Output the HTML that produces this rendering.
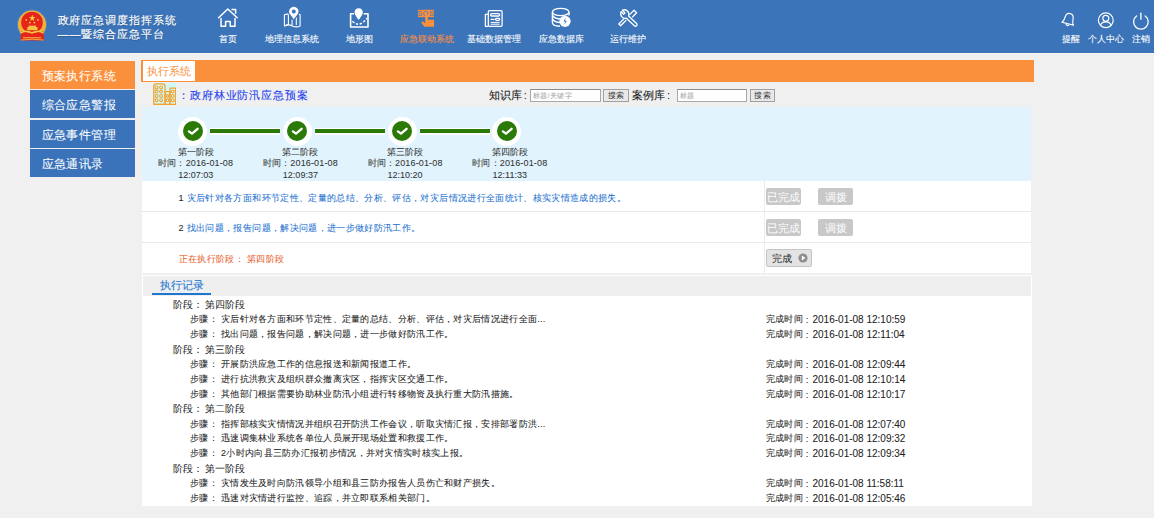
<!DOCTYPE html>
<html><head><meta charset="utf-8">
<style>
*{margin:0;padding:0;box-sizing:border-box}
html,body{width:1154px;height:518px;overflow:hidden;background:#f0f0f0;font-family:"Liberation Sans",sans-serif;color:#333}
.a{position:absolute}
.t{position:absolute;white-space:nowrap}
#hd{left:0;top:0;width:1154px;height:53px;background:#3b74b9}
#hdl{left:0;top:53px;width:1154px;height:1px;background:#f7f8f2}
.nav{position:absolute;top:0;width:70px;height:53px;color:#fff;text-align:center}
.nav svg{position:absolute;left:50%;top:6px;transform:translateX(-50%)}
.nav .lb{position:absolute;left:0;width:100%;top:33.6px;font-size:9px;line-height:11px;-webkit-text-stroke-width:.1px}
.menu{position:absolute;left:30px;width:105.2px;height:28px;background:#3a73ba;color:#fff;font-size:12px;letter-spacing:.4px;line-height:30px;padding-left:11.7px;-webkit-text-stroke-width:.05px}
.circ{position:absolute;top:116.5px;width:29px;height:29px;border-radius:50%;background:#fff}
.circ i{position:absolute;left:4.5px;top:4.5px;width:20px;height:20px;border-radius:50%;background:#2b7a08}
.circ svg{position:absolute;left:4.5px;top:4.5px}
.ln{position:absolute;top:127.5px;height:7px;background:#fff}
.ln i{position:absolute;left:0;right:0;top:1.5px;height:4px;background:#2b7a08}
.stg{position:absolute;width:100px;text-align:center;font-size:9px;line-height:11.5px;color:#333;-webkit-text-stroke-width:.05px}
.row{position:absolute;left:142px;width:889px;background:#fff}
.btn{position:absolute;height:17px;background:#c8c8c8;color:#fff;font-size:11px;line-height:19px;text-align:center;border-radius:2px;white-space:nowrap}
.rec{position:absolute;font-size:9.5px;line-height:15px;color:#222;white-space:nowrap;-webkit-text-stroke-width:.06px}
</style></head><body>
<div id="hd" class="a"></div>
<div id="hdl" class="a"></div>

<svg class="a" style="left:0;top:0" width="1154" height="53" viewBox="0 0 1154 53">
 <!-- emblem -->
 <g>
  <circle cx="32" cy="24.6" r="15" fill="#6a9ad6" opacity="0.45"/>
  <circle cx="32" cy="24.6" r="14.1" fill="#eeb234"/>
  <circle cx="32" cy="22.5" r="10.8" fill="#e6241b"/>
  <path d="M21 31.5 L43.5 31.5 L44 40.4 L20.6 40.4 Z" fill="#e6241b"/>
  <path d="M20.5 33 Q26 29.5 32 33 Q38 29.5 43.5 33" stroke="#f2c444" stroke-width="1.5" fill="none"/>
  <path d="M23 37.8 L41 37.8" stroke="#f2c444" stroke-width="1"/>
  <path d="M20.8 40 Q32 38.5 43.8 40" stroke="#f2c444" stroke-width="0.8" fill="none"/>
  <rect x="27.3" y="27" width="10.2" height="3.2" fill="#f2c444"/>
  <rect x="28.8" y="25.6" width="7.2" height="1.6" fill="#f2c444"/>
  <path d="M22.5 30.5 Q32 34.5 41.5 30.5" stroke="#f2c444" stroke-width="1" fill="none"/>
  <polygon points="32.3,14.6 33.1,17 35.6,17 33.6,18.5 34.3,20.9 32.3,19.4 30.3,20.9 31,18.5 29,17 31.5,17" fill="#ffd33c"/>
  <circle cx="26.3" cy="19.9" r="0.9" fill="#ffd33c"/>
  <circle cx="37.9" cy="19.9" r="0.9" fill="#ffd33c"/>
  <circle cx="29.8" cy="22.6" r="0.9" fill="#ffd33c"/>
  <circle cx="34.4" cy="22.6" r="0.9" fill="#ffd33c"/>
 </g>
 <!-- home -->
 <g fill="none" stroke="#fff" stroke-width="1.5" stroke-linecap="round" stroke-linejoin="round">
  <path d="M218.6 17.8 L227.8 9 L237.2 17.8"/>
  <path d="M232 9.4 L235.6 9.4 L235.6 13.2"/>
  <path d="M221 18.5 L221 26.3 L225.6 26.3 L225.6 21.4 L230.2 21.4 L230.2 26.3 L235 26.3 L235 18.5"/>
 </g>
 <!-- map -->
 <g fill="none" stroke="#fff" stroke-width="1.1" stroke-linejoin="round">
  <path d="M284.4 14.8 L288.4 13.9 L288.4 24.6 L284.4 25.9 Z"/>
  <path d="M284.4 25.9 Q288.3 23.9 292.3 25.9 Q296.3 27.8 300.1 25.9 L300.1 14.5 L296.4 14.5"/>
  <path d="M296.3 15 L296.3 24.9"/>
  <path d="M292.1 19.5 L292.1 25.6"/>
 </g>
 <path d="M293.8 6.3 A5.2 5.2 0 0 1 298.4 14 L293.8 19.8 L289.2 14 A5.2 5.2 0 0 1 293.8 6.3 Z" fill="#3b74b9" stroke="#3b74b9" stroke-width="1.4"/>
 <path d="M293.8 6.8 A4.7 4.7 0 0 1 297.9 13.8 L293.8 19.3 L289.7 13.8 A4.7 4.7 0 0 1 293.8 6.8 Z M293.8 9.4 A2 2 0 1 0 293.81 9.4 Z" fill="#fff" fill-rule="evenodd"/>
 <!-- terrain -->
 <g fill="none" stroke="#fff" stroke-width="1.6" stroke-linejoin="round">
  <path d="M354 13.8 L350.6 13.8 L350.6 27 L368 27 L368 13.8 L363.6 13.8"/>
  <path d="M352.4 21.2 Q357.5 26 362 23 Q365 21 367 18.2" stroke-dasharray="2.4 1.6" stroke-width="1.5"/>
 </g>
 <path d="M358.7 8.3 C361.3 8.3 362.8 10.2 362.8 12.4 C362.8 14.6 360 18 358.7 19.8 C357.4 18 354.6 14.6 354.6 12.4 C354.6 10.2 356.1 8.3 358.7 8.3 Z" fill="#fff" stroke="#3b74b9" stroke-width="1.2"/>
 <path d="M358.7 8.3 C361.3 8.3 362.8 10.2 362.8 12.4 C362.8 14.6 360 18 358.7 19.8 C357.4 18 354.6 14.6 354.6 12.4 C354.6 10.2 356.1 8.3 358.7 8.3 Z" fill="#fff"/>
 <!-- sos -->
 <g>
  <rect x="417.9" y="9.8" width="16" height="7.3" fill="#fb903c"/>
  <text x="425.9" y="15.9" font-size="7" font-family="Liberation Sans" fill="#3b74b9" text-anchor="middle" letter-spacing="0.6">SOS</text>
  <path d="M425.2 14.4 L427.8 14.4 L427.8 19.7 L434 19.7 L434 26.7 L424.4 26.7 L421.2 22.6 L422.6 21.2 L425.2 23.2 Z" fill="#fb903c"/>
 </g>
 <!-- newspaper -->
 <g fill="none" stroke="#fff" stroke-width="1.3" stroke-linejoin="round">
  <rect x="488.3" y="10.7" width="13.8" height="15.6" rx="1.2"/>
  <path d="M488.3 14.4 L485.4 14.4 L485.4 26.3 L488.3 26.3"/>
  <rect x="490.6" y="13.7" width="9" height="2.3" rx="1"/>
  <path d="M490.6 19.4 L494.5 19.4"/>
  <rect x="495.6" y="18.4" width="4" height="2" rx="0.8"/>
  <path d="M490.6 22.4 L499.6 22.4 M490.6 24.2 L499.6 24.2" stroke-width="1"/>
 </g>
 <!-- database -->
 <g fill="none" stroke="#fff" stroke-width="1.4">
  <ellipse cx="560.7" cy="12" rx="8.3" ry="3.6"/>
  <path d="M552.4 12 L552.4 22.5 Q552.4 26 560 26.2"/>
  <path d="M552.4 15.5 Q555 19 561 19"/>
  <path d="M552.4 19 Q555 22.5 560 22.5"/>
  <path d="M569 12 L569 15.5"/>
 </g>
 <circle cx="565" cy="21.3" r="5.6" fill="#fff"/>
 <path d="M565.8 17.8 L563.4 21.6 L565.2 21.6 L564.4 24.8 L566.8 20.8 L565 20.8 Z" fill="#3b74b9"/>
 <!-- tools -->
 <g fill="none" stroke="#fff" stroke-width="1.3" stroke-linejoin="round">
  <path d="M621.2 11.6 A4.6 4.6 0 0 0 626.4 18.2 L634.6 26 A1.6 1.6 0 0 0 636.8 23.8 L628.6 16 A4.6 4.6 0 0 0 622.4 10.2 L625 13 L623.6 14.4 Z"/>
  <path d="M629.6 14.6 L634 10.2 L636.6 12.8 L632.2 17.2"/>
  <path d="M626.2 20.2 L620.6 25.8 L618.8 24 L624.4 18.4"/>
 </g>
 <!-- bell -->
 <g fill="none" stroke="#fff" stroke-width="1.15" stroke-linejoin="round" stroke-linecap="round" transform="rotate(14 1068.6 20)">
  <path d="M1062.6 23.8 C1064.3 22.4 1064.4 20.6 1064.5 18.2 C1064.6 15.2 1066.1 13.4 1068.6 13.4 C1071.1 13.4 1072.6 15.2 1072.7 18.2 C1072.8 20.6 1072.9 22.4 1074.6 23.8 Z"/>
  <path d="M1067.1 24.8 Q1068.6 26.6 1070.1 24.8"/>
 </g>
 <!-- user -->
 <g fill="none" stroke="#fff" stroke-width="1.2">
  <circle cx="1105.8" cy="20.3" r="7.4"/>
  <circle cx="1105.8" cy="18.3" r="3"/>
  <path d="M1100.5 25.4 Q1101.5 21.8 1105.8 21.8 Q1110.1 21.8 1111.1 25.4"/>
 </g>
 <!-- power -->
 <g fill="none" stroke="#fff" stroke-width="1.3" stroke-linecap="round">
  <path d="M1136.6 16 A7.3 7.3 0 1 0 1145.2 16"/>
  <path d="M1140.9 13.2 L1140.9 19.2"/>
 </g>
</svg>
<div class="t" style="left:57.5px;top:12.7px;font-size:11px;letter-spacing:.9px;line-height:14.5px;color:#fff;-webkit-text-stroke:.15px #fff;text-shadow:0 1px 1px rgba(0,0,0,.25)">政府应急调度指挥系统<br>——暨综合应急平台</div>
<div class="nav" style="left:193px"><div class="lb">首页</div></div>
<div class="nav" style="left:257.3px"><div class="lb">地理信息系统</div></div>
<div class="nav" style="left:324.5px"><div class="lb">地形图</div></div>
<div class="nav" style="left:391.5px"><div class="lb" style="color:#fb903c">应急联动系统</div></div>
<div class="nav" style="left:459px"><div class="lb">基础数据管理</div></div>
<div class="nav" style="left:526px"><div class="lb">应急数据库</div></div>
<div class="nav" style="left:593px"><div class="lb">运行维护</div></div>
<div class="nav" style="left:1035.8px"><div class="lb">提醒</div></div>
<div class="nav" style="left:1070.7px"><div class="lb">个人中心</div></div>
<div class="nav" style="left:1105.5px"><div class="lb">注销</div></div>

<!-- left menu -->
<div class="menu" style="top:61px;background:#fb903c">预案执行系统</div>
<div class="menu" style="top:90.3px">综合应急警报</div>
<div class="menu" style="top:119.5px">应急事件管理</div>
<div class="menu" style="top:149px">应急通讯录</div>

<!-- orange bar -->
<div class="a" style="left:141px;top:60px;width:893px;height:22px;background:#fb903c"></div>
<div class="a" style="left:143px;top:61px;width:52px;height:20px;background:#fff;color:#fb903c;font-size:11px;line-height:20px;padding-left:3.5px">执行系统</div>

<!-- stage panel -->
<div class="a" style="left:142px;top:107px;width:889px;height:74px;background:#e1f3fd"></div>

<div class="circ" style="left:178.2px"><i></i><svg width="20" height="20" viewBox="0 0 20 20"><path d="M5.9 10.4 L9 12.7 L14.6 7.8" fill="none" stroke="#fff" stroke-width="2.3" stroke-linecap="round" stroke-linejoin="round"/></svg></div>
<div class="stg" style="left:145.7px;top:146.5px">第一阶段<br><span style="letter-spacing:.15px">时间：2016-01-08</span><br>12:07:03</div>
<div class="ln" style="left:210.2px;width:70.3px"><i></i></div>
<div class="circ" style="left:282.9px"><i></i><svg width="20" height="20" viewBox="0 0 20 20"><path d="M5.9 10.4 L9 12.7 L14.6 7.8" fill="none" stroke="#fff" stroke-width="2.3" stroke-linecap="round" stroke-linejoin="round"/></svg></div>
<div class="stg" style="left:250.4px;top:146.5px">第二阶段<br><span style="letter-spacing:.15px">时间：2016-01-08</span><br>12:09:37</div>
<div class="ln" style="left:314.9px;width:70.3px"><i></i></div>
<div class="circ" style="left:387.6px"><i></i><svg width="20" height="20" viewBox="0 0 20 20"><path d="M5.9 10.4 L9 12.7 L14.6 7.8" fill="none" stroke="#fff" stroke-width="2.3" stroke-linecap="round" stroke-linejoin="round"/></svg></div>
<div class="stg" style="left:355.1px;top:146.5px">第三阶段<br><span style="letter-spacing:.15px">时间：2016-01-08</span><br>12:10:20</div>
<div class="ln" style="left:419.6px;width:70.3px"><i></i></div>
<div class="circ" style="left:492.3px"><i></i><svg width="20" height="20" viewBox="0 0 20 20"><path d="M5.9 10.4 L9 12.7 L14.6 7.8" fill="none" stroke="#fff" stroke-width="2.3" stroke-linecap="round" stroke-linejoin="round"/></svg></div>
<div class="stg" style="left:459.8px;top:146.5px">第四阶段<br><span style="letter-spacing:.15px">时间：2016-01-08</span><br>12:11:33</div>
<div class="a" style="left:153px;top:82.7px;width:23px;height:22px">
<svg width="23" height="22" viewBox="0 0 23 22">
 <rect x="0" y="0" width="23" height="22" fill="#cff8f6"/>
 <g fill="none" stroke="#f2a431" stroke-width="1.25" stroke-linejoin="round">
  <path d="M0.8 21.4 L0.8 3.3 Q0.8 0.8 3.3 0.8 L9.6 0.8 Q12 0.8 12 3.3 L12 21.4 Z"/>
  <path d="M12 21.4 L12 8.6 L17 8.6 L17 21.4"/>
  <path d="M17 21.4 L17 5.2 L22.6 5.2 L22.6 21.4 L0.8 21.4"/>
 </g>
 <g fill="none" stroke="#f2a431" stroke-width="1.1">
  <circle cx="3.6" cy="4.4" r="1.45"/><circle cx="8.1" cy="4.4" r="1.45"/>
  <circle cx="3.6" cy="8.6" r="1.45"/><circle cx="8.1" cy="8.6" r="1.45"/>
  <circle cx="3.6" cy="12.9" r="1.45"/><circle cx="8.1" cy="12.9" r="1.45"/>
  <circle cx="3.6" cy="17.2" r="1.45"/><circle cx="8.1" cy="17.2" r="1.45"/>
  <circle cx="14.5" cy="12.9" r="1.3"/><circle cx="14.5" cy="17.2" r="1.3"/>
  <circle cx="19.8" cy="8.6" r="1.4"/><circle cx="19.8" cy="12.9" r="1.4"/><circle cx="19.8" cy="17.2" r="1.4"/>
 </g>
</svg></div>
<div class="t" style="left:178px;top:88px;font-size:11px;letter-spacing:.9px;line-height:14px;color:#2440ee;-webkit-text-stroke-width:.1px">：政府林业防汛应急预案</div>
<div class="t" style="left:488.5px;top:88px;font-size:11px;line-height:14px;color:#222;-webkit-text-stroke:.1px #222">知识库</div><div class="t" style="left:523.8px;top:87.5px;font-size:11px;line-height:14px;color:#222">:</div>
<div class="a" style="left:530px;top:89px;width:71px;height:12.5px;background:#fff;border:1px solid #a9a9a9;border-top-color:#8c8c8c"></div>
<div class="t" style="left:532.5px;top:90px;font-size:7px;letter-spacing:.45px;line-height:11px;color:#a0a0a0">标题/关键字</div>
<div class="a" style="left:603px;top:89px;width:26px;height:12.5px;background:#e9e9e9;border:1px solid #a0a0a0;font-size:8px;letter-spacing:.5px;line-height:11px;text-align:center;color:#333">搜索</div>
<div class="t" style="left:632px;top:88px;font-size:11px;line-height:14px;color:#222;-webkit-text-stroke:.1px #222">案例库</div><div class="t" style="left:667px;top:87.5px;font-size:11px;line-height:14px;color:#222">:</div>
<div class="a" style="left:677px;top:89px;width:70px;height:12.5px;background:#fff;border:1px solid #a9a9a9;border-top-color:#8c8c8c"></div>
<div class="t" style="left:679.5px;top:90px;font-size:7px;letter-spacing:.45px;line-height:11px;color:#a0a0a0">标题</div>
<div class="a" style="left:750px;top:89px;width:25px;height:12.5px;background:#e9e9e9;border:1px solid #a0a0a0;font-size:8px;letter-spacing:.5px;line-height:11px;text-align:center;color:#333">搜索</div>

<!-- table rows -->
<div class="row" style="top:181px;height:30.5px"></div>
<div class="row" style="top:212px;height:30px"></div>
<div class="row" style="top:243px;height:30px"></div>
<div class="a" style="left:764px;top:181px;width:1px;height:92px;background:#ececec"></div>
<div class="a" style="left:142px;top:211px;width:889px;height:1px;background:#e9e9e9"></div>
<div class="a" style="left:142px;top:242px;width:889px;height:1px;background:#e9e9e9"></div>


<div class="t" style="left:178.5px;top:191.5px;-webkit-text-stroke-width:.06px;font-size:9px;letter-spacing:.35px;line-height:13px;color:#222">1 <span style="color:#2372cf">灾后针对各方面和环节定性、定量的总结、分析、评估，对灾后情况进行全面统计、核实灾情造成的损失。</span></div>
<div class="t" style="left:178.5px;top:222px;-webkit-text-stroke-width:.06px;font-size:9px;letter-spacing:.35px;line-height:13px;color:#222">2 <span style="color:#2372cf">找出问题，报告问题，解决问题，进一步做好防汛工作。</span></div>
<div class="t" style="left:178.5px;top:253px;-webkit-text-stroke-width:.06px;font-size:9px;letter-spacing:.35px;line-height:13px;color:#e9642e">正在执行阶段： 第四阶段</div>
<div class="btn" style="left:766px;top:188px;width:34.5px">已完成</div>
<div class="btn" style="left:818px;top:188px;width:35px">调拨</div>
<div class="btn" style="left:766px;top:218.5px;width:34.5px">已完成</div>
<div class="btn" style="left:818px;top:218.5px;width:35px">调拨</div>
<div class="a" style="left:766px;top:249px;width:46px;height:17.5px;background:#e3e3e3;border:1px solid #c4c4c4;border-radius:2px;font-size:10px;line-height:18px;color:#222;padding-left:4.5px">完成
<svg style="position:absolute;left:30.7px;top:2.7px" width="10" height="10" viewBox="0 0 10 10"><circle cx="5" cy="5" r="4.6" fill="#8f8f8f"/><path d="M3.9 2.6 L7.3 5 L3.9 7.4 Z" fill="#fff"/></svg></div>

<!-- record panel -->
<div class="a" style="left:141.5px;top:275px;width:890px;height:231px;background:#fff"></div>
<div class="a" style="left:142.5px;top:276px;width:888px;height:20px;background:#efefef"></div>
<div class="a" style="left:152px;top:293.3px;width:58.5px;height:2px;background:#1f76d0"></div>
<div class="t" style="left:160px;top:279px;font-size:10.5px;line-height:13px;color:#2478d2;-webkit-text-stroke-width:.08px">执行记录</div>

<!--REC-->
<div class="rec" style="left:172.7px;top:296.9px;font-size:10px;-webkit-text-stroke-width:0">阶段：</div><div class="rec" style="left:204.6px;top:296.9px;font-size:10px;-webkit-text-stroke-width:0">第四阶段</div>
<div class="rec" style="left:190.1px;top:312.2px;font-size:9px;letter-spacing:.3px">步骤：</div><div class="rec" style="left:221.0px;top:312.2px;font-size:9px;letter-spacing:.3px">灾后针对各方面和环节定性、定量的总结、分析、评估，对灾后情况进行全面...</div>
<div class="rec" style="left:765.5px;top:312.2px;font-size:9px;letter-spacing:.4px">完成时间</div><div class="rec" style="left:805.8px;top:312.2px">:</div><div class="rec" style="left:812.5px;top:312.2px;font-size:10px">2016-01-08 12:10:59</div>
<div class="rec" style="left:190.1px;top:327.1px;font-size:9px;letter-spacing:.3px">步骤：</div><div class="rec" style="left:221.0px;top:327.1px;font-size:9px;letter-spacing:.3px">找出问题，报告问题，解决问题，进一步做好防汛工作。</div>
<div class="rec" style="left:765.5px;top:327.1px;font-size:9px;letter-spacing:.4px">完成时间</div><div class="rec" style="left:805.8px;top:327.1px">:</div><div class="rec" style="left:812.5px;top:327.1px;font-size:10px">2016-01-08 12:11:04</div>
<div class="rec" style="left:172.7px;top:341.6px;font-size:10px;-webkit-text-stroke-width:0">阶段：</div><div class="rec" style="left:204.6px;top:341.6px;font-size:10px;-webkit-text-stroke-width:0">第三阶段</div>
<div class="rec" style="left:190.1px;top:356.9px;font-size:9px;letter-spacing:.3px">步骤：</div><div class="rec" style="left:221.0px;top:356.9px;font-size:9px;letter-spacing:.3px">开展防洪应急工作的信息报送和新闻报道工作。</div>
<div class="rec" style="left:765.5px;top:356.9px;font-size:9px;letter-spacing:.4px">完成时间</div><div class="rec" style="left:805.8px;top:356.9px">:</div><div class="rec" style="left:812.5px;top:356.9px;font-size:10px">2016-01-08 12:09:44</div>
<div class="rec" style="left:190.1px;top:371.8px;font-size:9px;letter-spacing:.3px">步骤：</div><div class="rec" style="left:221.0px;top:371.8px;font-size:9px;letter-spacing:.3px">进行抗洪救灾及组织群众撤离灾区，指挥灾区交通工作。</div>
<div class="rec" style="left:765.5px;top:371.8px;font-size:9px;letter-spacing:.4px">完成时间</div><div class="rec" style="left:805.8px;top:371.8px">:</div><div class="rec" style="left:812.5px;top:371.8px;font-size:10px">2016-01-08 12:10:14</div>
<div class="rec" style="left:190.1px;top:386.7px;font-size:9px;letter-spacing:.3px">步骤：</div><div class="rec" style="left:221.0px;top:386.7px;font-size:9px;letter-spacing:.3px">其他部门根据需要协助林业防汛小组进行转移物资及执行重大防汛措施。</div>
<div class="rec" style="left:765.5px;top:386.7px;font-size:9px;letter-spacing:.4px">完成时间</div><div class="rec" style="left:805.8px;top:386.7px">:</div><div class="rec" style="left:812.5px;top:386.7px;font-size:10px">2016-01-08 12:10:17</div>
<div class="rec" style="left:172.7px;top:401.2px;font-size:10px;-webkit-text-stroke-width:0">阶段：</div><div class="rec" style="left:204.6px;top:401.2px;font-size:10px;-webkit-text-stroke-width:0">第二阶段</div>
<div class="rec" style="left:190.1px;top:416.5px;font-size:9px;letter-spacing:.3px">步骤：</div><div class="rec" style="left:221.0px;top:416.5px;font-size:9px;letter-spacing:.3px">指挥部核实灾情情况并组织召开防洪工作会议，听取灾情汇报，安排部署防洪...</div>
<div class="rec" style="left:765.5px;top:416.5px;font-size:9px;letter-spacing:.4px">完成时间</div><div class="rec" style="left:805.8px;top:416.5px">:</div><div class="rec" style="left:812.5px;top:416.5px;font-size:10px">2016-01-08 12:07:40</div>
<div class="rec" style="left:190.1px;top:431.4px;font-size:9px;letter-spacing:.3px">步骤：</div><div class="rec" style="left:221.0px;top:431.4px;font-size:9px;letter-spacing:.3px">迅速调集林业系统各单位人员展开现场处置和救援工作。</div>
<div class="rec" style="left:765.5px;top:431.4px;font-size:9px;letter-spacing:.4px">完成时间</div><div class="rec" style="left:805.8px;top:431.4px">:</div><div class="rec" style="left:812.5px;top:431.4px;font-size:10px">2016-01-08 12:09:32</div>
<div class="rec" style="left:190.1px;top:446.3px;font-size:9px;letter-spacing:.3px">步骤：</div><div class="rec" style="left:221.0px;top:446.3px;font-size:9px;letter-spacing:.3px">2小时内向县三防办汇报初步情况，并对灾情实时核实上报。</div>
<div class="rec" style="left:765.5px;top:446.3px;font-size:9px;letter-spacing:.4px">完成时间</div><div class="rec" style="left:805.8px;top:446.3px">:</div><div class="rec" style="left:812.5px;top:446.3px;font-size:10px">2016-01-08 12:09:34</div>
<div class="rec" style="left:172.7px;top:460.8px;font-size:10px;-webkit-text-stroke-width:0">阶段：</div><div class="rec" style="left:204.6px;top:460.8px;font-size:10px;-webkit-text-stroke-width:0">第一阶段</div>
<div class="rec" style="left:190.1px;top:476.1px;font-size:9px;letter-spacing:.3px">步骤：</div><div class="rec" style="left:221.0px;top:476.1px;font-size:9px;letter-spacing:.3px">灾情发生及时向防汛领导小组和县三防办报告人员伤亡和财产损失。</div>
<div class="rec" style="left:765.5px;top:476.1px;font-size:9px;letter-spacing:.4px">完成时间</div><div class="rec" style="left:805.8px;top:476.1px">:</div><div class="rec" style="left:812.5px;top:476.1px;font-size:10px">2016-01-08 11:58:11</div>
<div class="rec" style="left:190.1px;top:491.0px;font-size:9px;letter-spacing:.3px">步骤：</div><div class="rec" style="left:221.0px;top:491.0px;font-size:9px;letter-spacing:.3px">迅速对灾情进行监控、追踪，并立即联系相关部门。</div>
<div class="rec" style="left:765.5px;top:491.0px;font-size:9px;letter-spacing:.4px">完成时间</div><div class="rec" style="left:805.8px;top:491.0px">:</div><div class="rec" style="left:812.5px;top:491.0px;font-size:10px">2016-01-08 12:05:46</div>
<!--/REC-->
<script>
(function(){
 try{
 var t=document.createElement('span');
 t.style.cssText='position:absolute;left:-9999px;top:0;font-family:"Liberation Sans",sans-serif;font-size:100px;white-space:nowrap;letter-spacing:0';
 t.textContent='\u653f\u5e9c\u5e94\u6025';
 document.body.appendChild(t);
 var w=t.getBoundingClientRect().width/4;
 document.body.removeChild(t);
 if(w>90) return;
 var k=(100-w)/100; var A=0.4;
 var re=/[\u2E80-\u9FFF\u3000-\u303F\uFF00-\uFFEF]+/g;
 var walker=document.createTreeWalker(document.body,NodeFilter.SHOW_TEXT,null,false);
 var nodes=[];while(walker.nextNode())nodes.push(walker.currentNode);
 nodes.forEach(function(n){
  var s=n.nodeValue; re.lastIndex=0; if(!re.test(s))return; re.lastIndex=0;
  var p=n.parentNode; if(!p||(window.SVGElement&&p instanceof SVGElement))return;
  var cs=getComputedStyle(p); var fs=parseFloat(cs.fontSize); var ls=parseFloat(cs.letterSpacing)||0;
  var col=cs.color;
  var frag=document.createDocumentFragment(); var last=0; var m;
  while((m=re.exec(s))){
   if(m.index>last) frag.appendChild(document.createTextNode(s.slice(last,m.index)));
   var sp=document.createElement('span');
   sp.style.letterSpacing=(ls+k*fs)+'px';
   sp.className='cjf';
   var mm=col.match(/[\d.]+/g)||[0,0,0];
   sp.style.color='transparent';sp.style.webkitTextStroke='0';sp.style.textShadow='none';
   sp.style.backgroundImage='linear-gradient(rgba('+mm[0]+','+mm[1]+','+mm[2]+','+A+'),rgba('+mm[0]+','+mm[1]+','+mm[2]+','+A+'))';
   sp.style.backgroundRepeat='no-repeat';
   sp.style.backgroundSize='calc(100% - '+(k*fs+0.1*fs)+'px) '+(0.78*fs)+'px';
   sp.style.backgroundPosition=(0.05*fs)+'px 50%';
   sp.textContent=m[0]; frag.appendChild(sp);
   last=m.index+m[0].length;
  }
  if(last<s.length) frag.appendChild(document.createTextNode(s.slice(last)));
  p.replaceChild(frag,n);
 });
 document.documentElement.className+=' nocjk';
 }catch(e){}
})();
</script>
</body></html>
